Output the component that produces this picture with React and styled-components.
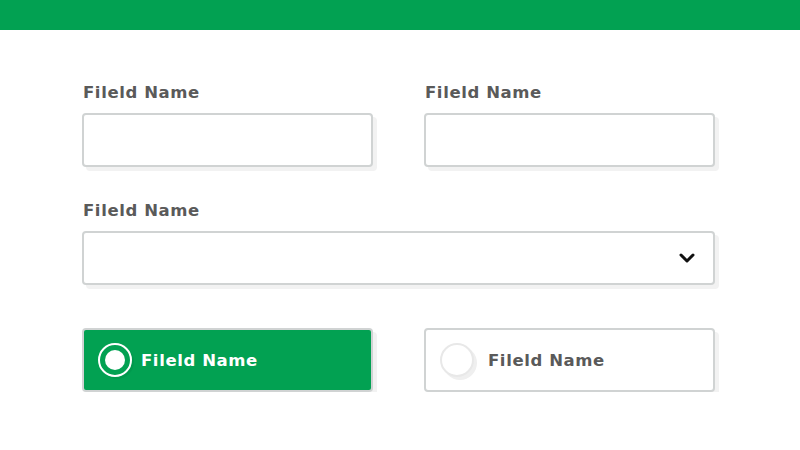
import React, { useState } from 'react';
import styled, { createGlobalStyle } from 'styled-components';

const GlobalStyle = createGlobalStyle`
  body {
    margin: 0;
    background: #fff;
    font-family: 'DejaVu Sans', 'Liberation Sans', sans-serif;
  }
`;

const TopBar = styled.div`
  height: 30px;
  background: #02a152;
`;

const Form = styled.form`
  width: 633px;
  padding: 53px 0 0 82px;
  display: grid;
  grid-template-columns: 291px 291px;
  column-gap: 51px;
  row-gap: 34px;
`;

const Field = styled.div`
  display: flex;
  flex-direction: column;
  grid-column: ${p => (p.wide ? '1 / span 2' : 'auto')};
`;

const Label = styled.label`
  font-size: 16.5px;
  line-height: 20px;
  font-weight: 600;
  color: #5a5a5a;
  padding-left: 1px;
  margin-bottom: 10px;
  letter-spacing: 0.6px;
`;

const Input = styled.input`
  box-sizing: border-box;
  height: 54px;
  width: 100%;
  border: 2px solid #d0d3d3;
  border-radius: 4px;
  background: #fff;
  box-shadow: 4px 4px 0 #f2f2f2;
  outline: none;
  padding: 0 14px;
  font: inherit;
`;

const SelectBox = styled.div`
  box-sizing: border-box;
  height: 54px;
  border: 2px solid #d0d3d3;
  border-radius: 4px;
  background: #fff;
  box-shadow: 4px 4px 0 #f2f2f2;
  display: flex;
  align-items: center;
  justify-content: flex-end;
  padding-right: 18px;
`;

const RadioRow = styled.div`
  grid-column: 1 / span 2;
  display: grid;
  grid-template-columns: 291px 291px;
  column-gap: 51px;
  margin-top: 9px;
`;

const RadioCard = styled.div`
  box-sizing: border-box;
  height: 64px;
  border: 2px solid #d0d3d3;
  border-radius: 4px;
  background: ${p => (p.checked ? '#02a152' : '#fff')};
  box-shadow: 4px 4px 0 #f2f2f2;
  display: flex;
  align-items: center;
  padding-left: 14px;
  gap: ${p => (p.checked ? '9px' : '14px')};
  cursor: pointer;
`;

const Dot = styled.span`
  box-sizing: border-box;
  width: 34px;
  height: 34px;
  border-radius: 50%;
  flex-shrink: 0;
  display: flex;
  align-items: center;
  justify-content: center;
  border: ${p => (p.checked ? '2px solid #fff' : '2px solid #e8e8e8')};
  background: ${p => (p.checked ? 'transparent' : '#fff')};
  box-shadow: ${p => (p.checked ? '2px 2px 0 rgba(0,0,0,0.05)' : '3px 3px 0 #efefef')};

  &::after {
    content: '';
    display: ${p => (p.checked ? 'block' : 'none')};
    width: 20px;
    height: 20px;
    border-radius: 50%;
    background: #fff;
  }
`;

const RadioText = styled.span`
  font-size: 16.5px;
  font-weight: 600;
  letter-spacing: 0.6px;
  color: ${p => (p.checked ? '#fff' : '#5a5a5a')};
`;

const Chevron = () => (
  <svg width="16" height="10" viewBox="0 0 16 10">
    <path d="M2 2 L8 8 L14 2" fill="none" stroke="#111" strokeWidth="3" strokeLinecap="round" strokeLinejoin="round" />
  </svg>
);

function App() {
  const [choice, setChoice] = useState(0);

  return (
    <>
      <GlobalStyle />
      <TopBar />
      <Form>
        <Field>
          <Label>Fileld Name</Label>
          <Input />
        </Field>
        <Field>
          <Label>Fileld Name</Label>
          <Input />
        </Field>
        <Field wide>
          <Label>Fileld Name</Label>
          <SelectBox>
            <Chevron />
          </SelectBox>
        </Field>
        <RadioRow>
          {[0, 1].map(i => (
            <RadioCard key={i} checked={choice === i} onClick={() => setChoice(i)}>
              <Dot checked={choice === i} />
              <RadioText checked={choice === i}>Fileld Name</RadioText>
            </RadioCard>
          ))}
        </RadioRow>
      </Form>
    </>
  );
}

export default App;
